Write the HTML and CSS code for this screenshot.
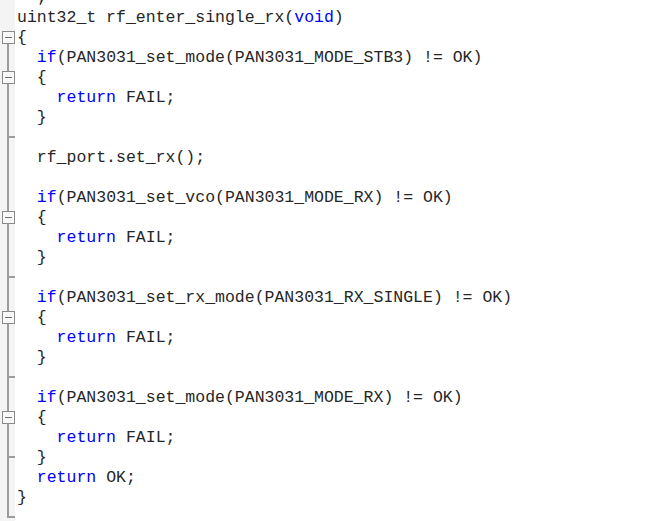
FILE: index.html
```html
<!DOCTYPE html>
<html>
<head>
<meta charset="utf-8">
<link rel="stylesheet" href="styles.css">
</head>
<body>
<div class="editor">
  <div class="row"><div class="g"></div><div class="c">  ;</div></div>
  <div class="row"><div class="g"></div><div class="c">uint32_t rf_enter_single_rx(<span class="kw">void</span>)</div></div>
  <div class="row"><div class="g first"><span class="box"></span></div><div class="c">{</div></div>
  <div class="row"><div class="g ln"></div><div class="c">  <span class="kw">if</span>(PAN3031_set_mode(PAN3031_MODE_STB3) != OK)</div></div>
  <div class="row"><div class="g ln"><span class="box"></span></div><div class="c">  {</div></div>
  <div class="row"><div class="g ln"></div><div class="c">    <span class="kw">return</span> FAIL;</div></div>
  <div class="row"><div class="g ln"></div><div class="c">  }</div></div>
  <div class="row"><div class="g ln tick"></div><div class="c"></div></div>
  <div class="row"><div class="g ln"></div><div class="c">  rf_port.set_rx();</div></div>
  <div class="row"><div class="g ln"></div><div class="c"></div></div>
  <div class="row"><div class="g ln"></div><div class="c">  <span class="kw">if</span>(PAN3031_set_vco(PAN3031_MODE_RX) != OK)</div></div>
  <div class="row"><div class="g ln"><span class="box"></span></div><div class="c">  {</div></div>
  <div class="row"><div class="g ln"></div><div class="c">    <span class="kw">return</span> FAIL;</div></div>
  <div class="row"><div class="g ln"></div><div class="c">  }</div></div>
  <div class="row"><div class="g ln tick"></div><div class="c"></div></div>
  <div class="row"><div class="g ln"></div><div class="c">  <span class="kw">if</span>(PAN3031_set_rx_mode(PAN3031_RX_SINGLE) != OK)</div></div>
  <div class="row"><div class="g ln"><span class="box"></span></div><div class="c">  {</div></div>
  <div class="row"><div class="g ln"></div><div class="c">    <span class="kw">return</span> FAIL;</div></div>
  <div class="row"><div class="g ln"></div><div class="c">  }</div></div>
  <div class="row"><div class="g ln tick"></div><div class="c"></div></div>
  <div class="row"><div class="g ln"></div><div class="c">  <span class="kw">if</span>(PAN3031_set_mode(PAN3031_MODE_RX) != OK)</div></div>
  <div class="row"><div class="g ln"><span class="box"></span></div><div class="c">  {</div></div>
  <div class="row"><div class="g ln"></div><div class="c">    <span class="kw">return</span> FAIL;</div></div>
  <div class="row"><div class="g ln tick"></div><div class="c">  }</div></div>
  <div class="row"><div class="g ln"></div><div class="c">  <span class="kw">return</span> OK;</div></div>
  <div class="row"><div class="g ln"></div><div class="c">}</div></div>
  <div class="row"><div class="g end"></div><div class="c"></div></div>
</div>
</body>
</html>
```
FILE: styles.css
```css
html, body {
  margin: 0;
  padding: 0;
  background: #ffffff;
  overflow: hidden;
}

.editor {
  display: flex;
  flex-direction: column;
  margin-top: -13px;
  font-family: "Liberation Mono", "Courier New", monospace;
  font-size: 16.5px;
  color: #262626;
}

.row {
  display: flex;
  height: 20px;
}

.g {
  width: 15px;
  flex: none;
  background: #f4f4f4;
  display: flex;
  align-items: center;
  justify-content: center;
}

.g.ln {
  background: linear-gradient(to right, transparent 7px, #9c9c9c 7px, #9c9c9c 9px, transparent 9px) no-repeat, #f4f4f4;
}

.g.first {
  background: linear-gradient(to right, transparent 7px, #9c9c9c 7px, #9c9c9c 9px, transparent 9px) 0 10px / 100% 10px no-repeat, #f4f4f4;
}

.g.tick {
  background:
    linear-gradient(#9c9c9c, #9c9c9c) 8px 9px / 8px 2px no-repeat,
    linear-gradient(to right, transparent 7px, #9c9c9c 7px, #9c9c9c 9px, transparent 9px) no-repeat,
    #f4f4f4;
}

.g.end {
  background:
    linear-gradient(#9c9c9c, #9c9c9c) 8px 9px / 8px 2px no-repeat,
    linear-gradient(to right, transparent 7px, #9c9c9c 7px, #9c9c9c 9px, transparent 9px) 0 0 / 100% 11px no-repeat,
    #f4f4f4;
}

.box {
  width: 11px;
  height: 11px;
  border: 1px solid #8a8a8a;
  background: #f8f8f8 linear-gradient(#6e6e6e, #6e6e6e) center / 7px 1px no-repeat;
  margin-left: 1px;
}

.c {
  padding-left: 2px;
  padding-top: 1px;
  white-space: pre;
  line-height: 20px;
  height: 19px;
}

.kw {
  color: #0000ff;
}
```
